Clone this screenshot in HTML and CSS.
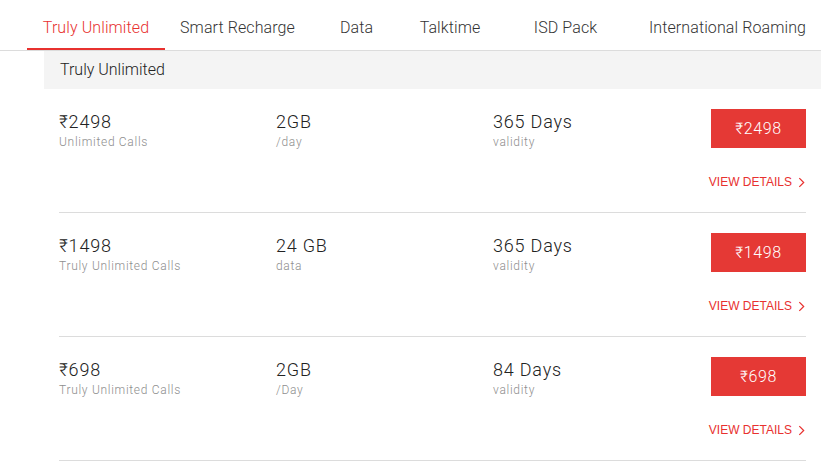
FILE: index.html
```html
<!DOCTYPE html>
<html lang="en">
<head>
<meta charset="utf-8">
<title>Recharge Plans</title>
<link rel="stylesheet" href="styles.css">
</head>
<body>
  <nav class="tabs">
    <a class="tab tab-active">Truly Unlimited</a>
    <a class="tab">Smart Recharge</a>
    <a class="tab">Data</a>
    <a class="tab">Talktime</a>
    <a class="tab">ISD Pack</a>
    <a class="tab">International Roaming</a>
  </nav>

  <section class="plans">
    <h2 class="plans-title">Truly Unlimited</h2>
    <div class="plan-list">
      <div class="plan">
        <div class="plan-col">
          <div class="plan-value">₹2498</div>
          <div class="plan-label">Unlimited Calls</div>
        </div>
        <div class="plan-col">
          <div class="plan-value">2GB</div>
          <div class="plan-label">/day</div>
        </div>
        <div class="plan-col">
          <div class="plan-value">365 Days</div>
          <div class="plan-label">validity</div>
        </div>
        <button class="plan-buy">₹2498</button>
        <a class="plan-details">VIEW DETAILS
          <svg class="chevron" viewBox="0 0 8 12" width="7" height="11"><path d="M1.5 1 L6.5 6 L1.5 11" fill="none" stroke="currentColor" stroke-width="1.4"/></svg>
        </a>
      </div>

      <div class="plan">
        <div class="plan-col">
          <div class="plan-value">₹1498</div>
          <div class="plan-label">Truly Unlimited Calls</div>
        </div>
        <div class="plan-col">
          <div class="plan-value">24 GB</div>
          <div class="plan-label">data</div>
        </div>
        <div class="plan-col">
          <div class="plan-value">365 Days</div>
          <div class="plan-label">validity</div>
        </div>
        <button class="plan-buy">₹1498</button>
        <a class="plan-details">VIEW DETAILS
          <svg class="chevron" viewBox="0 0 8 12" width="7" height="11"><path d="M1.5 1 L6.5 6 L1.5 11" fill="none" stroke="currentColor" stroke-width="1.4"/></svg>
        </a>
      </div>

      <div class="plan">
        <div class="plan-col">
          <div class="plan-value">₹698</div>
          <div class="plan-label">Truly Unlimited Calls</div>
        </div>
        <div class="plan-col">
          <div class="plan-value">2GB</div>
          <div class="plan-label">/Day</div>
        </div>
        <div class="plan-col">
          <div class="plan-value">84 Days</div>
          <div class="plan-label">validity</div>
        </div>
        <button class="plan-buy">₹698</button>
        <a class="plan-details">VIEW DETAILS
          <svg class="chevron" viewBox="0 0 8 12" width="7" height="11"><path d="M1.5 1 L6.5 6 L1.5 11" fill="none" stroke="currentColor" stroke-width="1.4"/></svg>
        </a>
      </div>
    </div>
  </section>
</body>
</html>
```

FILE: styles.css
```css
* {
  box-sizing: border-box;
}

body {
  margin: 0;
  background: #fff;
  font-family: Roboto, "Noto Sans", "DejaVu Sans", sans-serif;
  color: #2b2b2b;
}

/* tab strip */
.tabs {
  display: grid;
  grid-template-columns: 138px 145px 93px 94px 137px 187px;
  width: 821px;
  padding-left: 27px;
  border-bottom: 1px solid #dcdcdc;
}

.tab {
  height: 50px;
  padding-top: 18px;
  text-align: center;
  font-size: 16px;
  line-height: 20px;
  font-weight: 300;
  letter-spacing: 0.1px;
  color: #333;
  white-space: nowrap;
  border-bottom: 2px solid transparent;
}

.tab-active {
  color: #e8312f;
  border-bottom-color: #e8312f;
}

/* plan section */
.plans {
  width: 777px;
  margin-left: 44px;
}

.plans-title {
  margin: 0;
  height: 38px;
  padding: 9px 0 0 16px;
  background: #f4f4f4;
  font-size: 16px;
  line-height: 19px;
  font-weight: 300;
  color: #222;
}

.plan-list {
  padding: 0 15px;
}

.plan {
  display: grid;
  grid-template-columns: 217px 217px 1fr 95px;
  grid-template-rows: auto auto;
  align-content: start;
  height: 124px;
  padding-top: 20px;
  border-bottom: 1px solid #dcdcdc;
}

.plan-col {
  padding-top: 2px;
}

.plan-value {
  font-size: 18px;
  line-height: 22px;
  font-weight: 300;
  letter-spacing: 0.8px;
  color: #222;
}

.plan-label {
  margin-top: 2px;
  font-size: 12px;
  line-height: 15px;
  font-weight: 300;
  letter-spacing: 0.7px;
  color: #8e8e8e;
}

.plan-buy {
  width: 95px;
  height: 39px;
  border: 0;
  background: #e53935;
  color: #fff;
  font-family: Roboto, "Noto Sans", sans-serif;
  font-size: 16px;
  font-weight: 300;
  letter-spacing: 0.6px;
  padding: 0;
}

.plan-details {
  grid-column: 1 / -1;
  justify-self: end;
  display: flex;
  align-items: center;
  gap: 6px;
  margin-top: 25px;
  margin-right: 1px;
  font-family: "Liberation Sans", Arial, sans-serif;
  font-size: 12px;
  line-height: 14px;
  color: #e8312f;
}

.chevron {
  display: block;
}
```
